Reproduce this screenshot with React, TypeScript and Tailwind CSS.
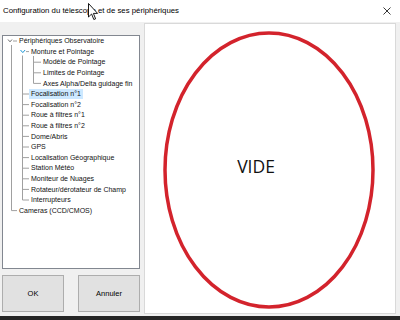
const rows: { label: string; level: number; selected?: boolean }[] = [
  { label: "Périphériques Observatoire", level: 0 },
  { label: "Monture et Pointage", level: 1 },
  { label: "Modèle de Pointage", level: 2 },
  { label: "Limites de Pointage", level: 2 },
  { label: "Axes Alpha/Delta guidage fin", level: 2 },
  { label: "Focalisation n°1", level: 1, selected: true },
  { label: "Focalisation n°2", level: 1 },
  { label: "Roue à filtres n°1", level: 1 },
  { label: "Roue à filtres n°2", level: 1 },
  { label: "Dome/Abris", level: 1 },
  { label: "GPS", level: 1 },
  { label: "Localisation Géographique", level: 1 },
  { label: "Station Météo", level: 1 },
  { label: "Moniteur de Nuages", level: 1 },
  { label: "Rotateur/dérotateur de Champ", level: 1 },
  { label: "Interrupteurs", level: 1 },
  { label: "Cameras (CCD/CMOS)", level: 0 },
];

const ROW = 10.6;
const cy = (i: number) => 5 + ROW * i;

function TreeLines() {
  const level1 = [5, 6, 7, 8, 9, 10, 11, 12, 13, 14, 15];
  const level2 = [2, 3, 4];
  return (
    <svg className="absolute left-0 top-0" width="136" height="232" fill="none">
      <g stroke="#a0a0a0" strokeWidth="1">
        <line x1="8.5" y1="9" x2="8.5" y2={cy(16)} />
        <line x1="10" y1={cy(0)} x2="14" y2={cy(0)} />
        <line x1="8.5" y1={cy(16)} x2="14" y2={cy(16)} />
        <line x1="19.5" y1="19.5" x2="19.5" y2={cy(15)} />
        <line x1="23" y1={cy(1)} x2="26" y2={cy(1)} />
        {level1.map((i) => (
          <line key={i} x1="19.5" y1={cy(i)} x2="26" y2={cy(i)} />
        ))}
        <line x1="30.5" y1="20" x2="30.5" y2={cy(4)} />
        {level2.map((i) => (
          <line key={i} x1="30.5" y1={cy(i)} x2="38" y2={cy(i)} />
        ))}
      </g>
      <path d="M5 3.5 L7 5.8 L9 3.5" stroke="#606060" strokeWidth="0.9" />
      <path d="M17.5 14 L19.8 16.6 L22.1 14" stroke="#1c97d6" strokeWidth="1" />
    </svg>
  );
}

export default function App() {
  return (
    <div
      className="relative w-[400px] h-[320px] bg-[#f0f0f0] flex flex-col overflow-hidden"
      style={{ fontFamily: '"Liberation Sans", Arial, sans-serif' }}
    >
      <div className="h-[22px] bg-white flex items-center justify-between pl-[3px] pr-[9px]">
        <span className="text-[7.8px] text-black">
          Configuration du télescope et de ses périphériques
        </span>
        <svg width="8" height="8" viewBox="0 0 8 8">
          <path d="M0.5 0.5 L7.5 7.5 M7.5 0.5 L0.5 7.5" stroke="#222" strokeWidth="0.9" />
        </svg>
      </div>

      <div className="flex-1 flex pl-[2px] gap-[4px]">
        <div className="w-[138px] flex flex-col pt-[13px]">
          <div className="h-[234px] border border-[#828790] bg-white">
            <div className="relative h-full">
              <TreeLines />
              {rows.map((r) => (
                <div
                  key={r.label}
                  className="h-[10.6px] flex items-center text-[7px] text-[#111] whitespace-nowrap"
                  style={{ paddingLeft: 14 + r.level * 12 }}
                >
                  <span className={`px-[2px] leading-[10px] ${r.selected ? "bg-[#cce8ff]" : ""}`}>
                    {r.label}
                  </span>
                </div>
              ))}
            </div>
          </div>
          <div className="mt-[6px] flex gap-[14px]">
            <button className="w-[62px] h-[37px] bg-[#e1e1e1] border border-[#adadad] text-[7.5px] text-black">
              OK
            </button>
            <button className="w-[62px] h-[37px] bg-[#e1e1e1] border border-[#adadad] text-[7.5px] text-black">
              Annuler
            </button>
          </div>
        </div>

        <div className="mt-[1px] w-[252px] h-[291px] bg-white border border-[#d9d9d9]">
          <svg width="250" height="289" viewBox="0 0 250 289">
            <ellipse cx="124" cy="146" rx="104" ry="137" fill="none" stroke="#d3232c" strokeWidth="3.5" />
            <text
              x="111"
              y="149"
              textAnchor="middle"
              fontSize="17.5"
              fill="#111"
              style={{ fontFamily: '"Open Sans", sans-serif' }}
            >
              VIDE
            </text>
          </svg>
        </div>
      </div>

      <div className="h-[4px] bg-[#262626]" />

      <svg className="absolute left-[88px] top-[3px]" width="11" height="18" viewBox="0 0 11 18">
        <path d="M0.5 0.5 L0.5 14 L3.6 11 L5.8 16.5 L7.6 15.8 L5.4 10.4 L9.6 10.4 Z" fill="#fff" stroke="#000" strokeWidth="0.9" />
      </svg>
    </div>
  );
}
